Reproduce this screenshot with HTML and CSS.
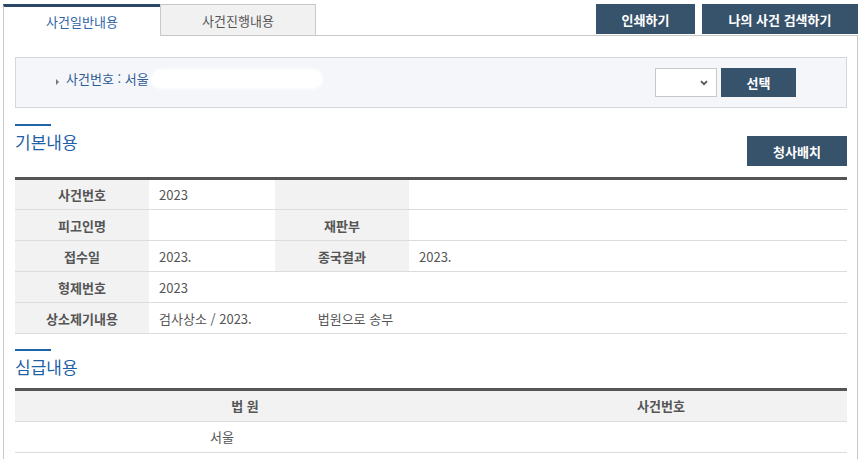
FILE: index.html
```html
<!DOCTYPE html>
<html lang="ko">
<head>
<meta charset="utf-8">
<title>사건일반내용</title>
<link rel="stylesheet" href="styles.css">
</head>
<body>
<div class="wrap">
  <div class="topbar">
    <div class="tab tab-active">사건일반내용</div>
    <div class="tab tab-inactive">사건진행내용</div>
    <div class="filler">
      <button class="btn btn-print">인쇄하기</button>
      <button class="btn btn-mycase">나의 사건 검색하기</button>
    </div>
  </div>
  <div class="content">
    <div class="searchbox">
      <div class="label"><span class="bullet"></span>사건번호 : 서울<span class="mask"></span></div>
      <div class="controls">
        <div class="select">
          <svg width="8" height="6" viewBox="0 0 8 6"><path d="M1 1.2 L4 4.2 L7 1.2" fill="none" stroke="#555" stroke-width="1.8"/></svg>
        </div>
        <button class="btn btn-select">선택</button>
      </div>
    </div>

    <div class="sec-head">
      <div class="title"><span class="bar"></span><h2>기본내용</h2></div>
      <button class="btn btn-map">청사배치</button>
    </div>
    <table class="grid info">
      <colgroup><col class="c1"><col class="c2"><col class="c3"><col></colgroup>
      <tr><th>사건번호</th><td>2023</td><th></th><td></td></tr>
      <tr><th>피고인명</th><td></td><th>재판부</th><td></td></tr>
      <tr><th>접수일</th><td>2023.</td><th>종국결과</th><td>2023.</td></tr>
      <tr><th>형제번호</th><td colspan="3">2023</td></tr>
      <tr><th>상소제기내용</th><td colspan="3">검사상소 / 2023.<span class="gap">법원으로 송부</span></td></tr>
    </table>

    <div class="sec-head sec-head-2">
      <div class="title"><span class="bar"></span><h2>심급내용</h2></div>
    </div>
    <table class="grid levels">
      <colgroup><col class="l1"><col></colgroup>
      <tr><th>법 원</th><th>사건번호</th></tr>
      <tr><td class="center">서울<span class="blank"></span></td><td></td></tr>
    </table>
  </div>
</div>
</body>
</html>
```

FILE: styles.css
```css
body {
  margin: 0;
  background: #fff;
  font-family: "Noto Sans CJK KR", "Noto Sans", sans-serif;
  color: #555;
}

.wrap {
  width: 855px;
  margin: 4px 0 0 3px;
}

.topbar {
  display: flex;
  height: 32px;
}

.tab {
  box-sizing: border-box;
  display: flex;
  align-items: center;
  justify-content: center;
  font-size: 13px;
}

.tab-active {
  width: 157px;
  border-left: 1px solid #c8c8c8;
  border-top: 3px solid #2b4766;
  color: #2e64aa;
}

.tab-inactive {
  width: 156px;
  border: 1px solid #c8c8c8;
  background: #f1f1f1;
  color: #555;
}

.filler {
  flex: 1;
  display: flex;
  justify-content: flex-end;
  align-items: flex-start;
  gap: 7px;
  border-bottom: 1px solid #c8c8c8;
}

.btn {
  border: none;
  background: #37536c;
  color: #fff;
  font-family: "Noto Sans CJK KR", "Noto Sans", sans-serif;
  font-size: 13px;
  font-weight: bold;
  height: 30px;
  padding: 0;
  cursor: pointer;
}

.btn-print { width: 99px; }
.btn-mycase { width: 156px; }
.btn-select { width: 75px; height: 29px; }
.btn-map { width: 100px; margin-top: 12px; }

.content {
  border: 1px solid #c8c8c8;
  border-top: none;
  padding: 21px 10px 20px 11px;
}

.searchbox {
  box-sizing: border-box;
  height: 51px;
  border: 1px solid #d3d6dd;
  background: #f5f6fa;
  display: flex;
  align-items: center;
  justify-content: space-between;
  padding: 0 50px 0 40px;
}

.label {
  display: flex;
  align-items: center;
  font-size: 13px;
  color: #2d5b94;
  margin-bottom: 8px;
}

.bullet {
  width: 0;
  height: 0;
  border-left: 3px solid #777;
  border-top: 3px solid transparent;
  border-bottom: 3px solid transparent;
  margin: 6px 7px 0 0;
}

.mask {
  display: inline-block;
  width: 170px;
  height: 18px;
  margin-left: 3px;
  background: #fff;
  border-radius: 9px;
  box-shadow: 0 0 3px 1px #fff;
}

.controls {
  display: flex;
  gap: 4px;
}

.select {
  box-sizing: border-box;
  width: 62px;
  height: 29px;
  background: #fff;
  border: 1px solid #c8c8c8;
  display: flex;
  align-items: center;
  justify-content: flex-end;
  padding-right: 8px;
}

.sec-head {
  display: flex;
  justify-content: space-between;
  align-items: flex-start;
  margin-top: 16px;
  margin-bottom: 11px;
}

.sec-head-2 {
  margin-top: 15px;
  margin-bottom: 9px;
}

.title .bar {
  display: block;
  width: 36px;
  height: 2px;
  background: #2163a8;
}

.title h2 {
  margin: 4px 0 0;
  font-size: 17px;
  line-height: 24px;
  font-weight: normal;
  color: #1f5fa6;
}

.grid {
  width: 100%;
  border-collapse: collapse;
  table-layout: fixed;
  border-top: 3px solid #555;
  font-size: 13px;
}

.grid th,
.grid td {
  height: 31px;
  padding: 0 10px;
  border-bottom: 1px solid #dcdcdc;
  color: #555;
  box-sizing: border-box;
}

.levels th,
.levels td {
  height: 31.5px;
}

.grid th {
  background: #f2f2f2;
  font-weight: 600;
  text-align: center;
}

.grid td {
  text-align: left;
}

.info .c1 { width: 134px; }
.info .c2 { width: 126px; }
.info .c3 { width: 134px; }

.levels .l1 { width: 460px; }

.grid td.center {
  text-align: center;
}

.gap {
  margin-left: 66px;
}

.blank {
  display: inline-block;
  width: 46px;
}
```
